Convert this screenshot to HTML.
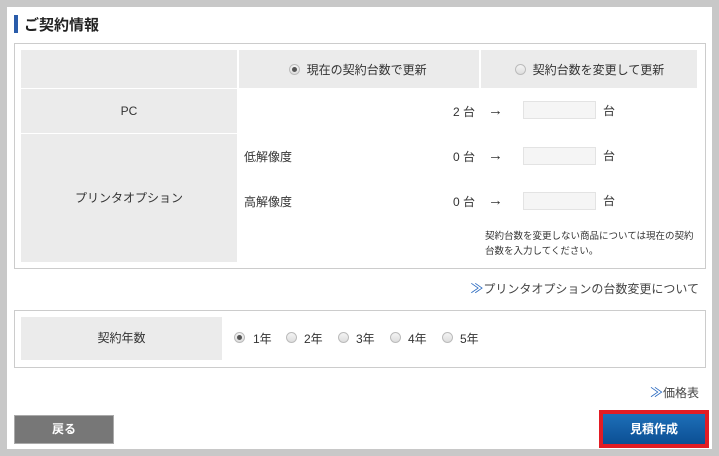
<!DOCTYPE html><html><head><meta charset="utf-8"><style>
*{margin:0;padding:0;box-sizing:border-box}
body{width:719px;height:456px;background:#c8c8c8;font-family:"Liberation Sans","Noto Sans CJK JP",sans-serif;font-size:12px;color:#333;position:relative;overflow:hidden}
.a{position:absolute}
.main{left:7px;top:7px;width:705px;height:442px;background:#fff}
.g{background:#ebebeb}
.r{width:11px;height:11px;border-radius:50%;border:1px solid #bbb;background:linear-gradient(#f4f4f4,#ddd);display:inline-block}
.r.on::after{content:"";display:block;width:5px;height:5px;border-radius:50%;background:#555;margin:2px}
.inp{width:73px;height:18px;background:#f5f5f5;border:1px solid #e3e3e3}
.c{text-align:center}
.ar{font-size:15px;line-height:14px}
.lk{color:#2a6ac0;font-size:13px}
</style></head><body>
<div class="a main"></div>
<div class="a" style="left:14px;top:15px;width:4px;height:18px;background:#2a5caa"></div>
<div class="a" style="left:24px;top:14px;font-size:15px;font-weight:bold;color:#222">ご契約情報</div>
<div class="a" style="left:14px;top:43px;width:692px;height:226px;border:1px solid #ccc"></div>
<div class="a g" style="left:21px;top:50px;width:216px;height:38px"></div>
<div class="a g" style="left:239px;top:50px;width:240px;height:38px"></div>
<div class="a g" style="left:481px;top:50px;width:216px;height:38px"></div>
<div class="a g c" style="left:21px;top:89px;width:216px;height:44px;line-height:44px">PC</div>
<div class="a g c" style="left:21px;top:134px;width:216px;height:128px;line-height:128px">プリンタオプション</div>
<div class="a" style="left:289px;top:61px"><span class="r on" style="vertical-align:-1px"></span>&nbsp; 現在の契約台数で更新</div>
<div class="a" style="left:515px;top:61px"><span class="r" style="vertical-align:-1px"></span>&nbsp; 契約台数を変更して更新</div>
<div class="a" style="left:453px;top:103px">2 台</div><div class="a ar" style="left:488px;top:104px">→</div>
<div class="a inp" style="left:523px;top:101px"></div><div class="a" style="left:603px;top:102px">台</div>
<div class="a" style="left:244px;top:148px">低解像度</div>
<div class="a" style="left:453px;top:148px">0 台</div><div class="a ar" style="left:488px;top:149px">→</div>
<div class="a inp" style="left:523px;top:147px"></div><div class="a" style="left:603px;top:147px">台</div>
<div class="a" style="left:244px;top:193px">高解像度</div>
<div class="a" style="left:453px;top:193px">0 台</div><div class="a ar" style="left:488px;top:194px">→</div>
<div class="a inp" style="left:523px;top:192px"></div><div class="a" style="left:603px;top:192px">台</div>
<div class="a" style="left:485px;top:229px;font-size:9.5px;line-height:15px;width:210px">契約台数を変更しない商品については現在の契約<br>台数を入力してください。</div>
<div class="a" style="right:20px;top:278px;color:#444"><span class="lk">≫</span>プリンタオプションの台数変更について</div>
<div class="a" style="left:14px;top:310px;width:692px;height:58px;border:1px solid #ccc"></div>
<div class="a g c" style="left:21px;top:317px;width:201px;height:43px;line-height:43px">契約年数</div>
<div class="a" style="left:234px;top:331px"><span class="r on" style="vertical-align:-1px"></span></div><div class="a" style="left:253px;top:330px">1年</div>
<div class="a" style="left:286px;top:331px"><span class="r" style="vertical-align:-1px"></span></div><div class="a" style="left:304px;top:330px">2年</div>
<div class="a" style="left:338px;top:331px"><span class="r" style="vertical-align:-1px"></span></div><div class="a" style="left:356px;top:330px">3年</div>
<div class="a" style="left:390px;top:331px"><span class="r" style="vertical-align:-1px"></span></div><div class="a" style="left:408px;top:330px">4年</div>
<div class="a" style="left:442px;top:331px"><span class="r" style="vertical-align:-1px"></span></div><div class="a" style="left:460px;top:330px">5年</div>
<div class="a" style="right:20px;top:382px;color:#444"><span class="lk">≫</span>価格表</div>
<div class="a c" style="left:14px;top:415px;width:100px;height:29px;background:#777;border:1px solid #aaa;color:#fff;font-weight:bold;line-height:27px">戻る</div>
<div class="a" style="left:599px;top:410px;width:110px;height:38px;background:#e21c24"></div>
<div class="a c" style="left:603px;top:414px;width:102px;height:30px;background:linear-gradient(#1d6fb8,#0c4f94);color:#fff;font-weight:bold;line-height:30px">見積作成</div>
</body></html>
